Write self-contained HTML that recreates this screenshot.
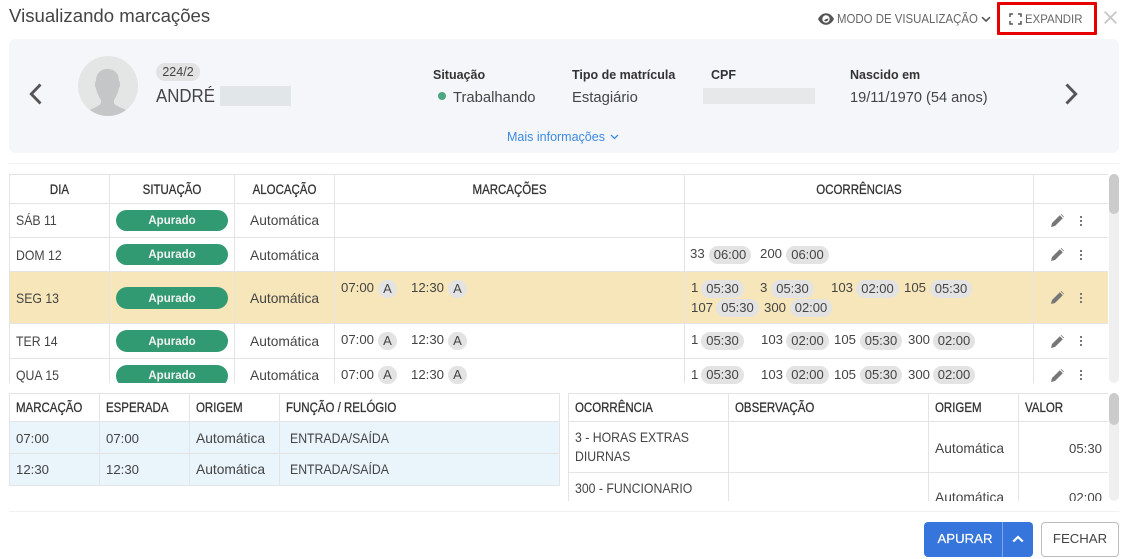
<!DOCTYPE html>
<html><head><meta charset="utf-8"><style>
html,body{margin:0;padding:0;width:1126px;height:559px;overflow:hidden;background:#fff}
body{position:relative;font-family:"Liberation Sans",Arial,sans-serif;font-size:13.8px;color:#444}
.t{position:absolute;white-space:nowrap;line-height:18px;height:18px;margin-top:1px}
.n{margin-top:0}
.b{position:absolute}
.h{color:#333;-webkit-text-stroke:.3px #333;font-size:13.5px;transform:scaleX(.85);transform-origin:left center}
.h.c{transform-origin:center}
.c{text-align:center}
.u{font-size:13.8px;transform:scaleX(.89);transform-origin:left center}
.r{font-size:13.2px}
.p{position:absolute;left:116px;width:112px;background:#329a73;color:#f2f2f2;border-radius:11px;text-align:center;font-weight:bold;font-size:11.5px}
.g{position:absolute;background:#e3e3e3;border-radius:9px;height:18px;line-height:18px;text-align:center;font-size:13px;color:#444}
.l{position:absolute;background:#e4e4e4}
.lab{font-weight:bold;color:#333;font-size:12.5px}
.v{font-size:14.8px}
svg{position:absolute;overflow:visible}
</style></head><body>

<div class="t n" style="left:9px;top:4px;line-height:24px;height:24px;font-size:18.6px;color:#444">Visualizando marcações</div>

<svg style="left:818px;top:12px" width="16" height="14" viewBox="0 0 16 14"><path d="M0 7C2 3 5 1.200 8 1.200S14 3 16 7C14 11 11 12.800 8 12.800S2 11 0 7Z" fill="#555"/><circle cx="8" cy="7" r="3.700" fill="#fff"/><path d="M6 8.500A2.500 2.500 0 0 0 10.300 6.500L8 7Z" fill="#555"/></svg>
<div class="t n" style="left:837px;top:10px;font-size:12.7px;color:#666;transform:scaleX(.9);transform-origin:left center">MODO DE VISUALIZAÇÃO</div>
<svg style="left:981px;top:16px" width="10" height="7" viewBox="0 0 10 7"><path d="M1 1.200L5 5L9 1.200" fill="none" stroke="#555" stroke-width="1.600"/></svg>
<div class="b" style="left:997px;top:2px;width:94px;height:27px;border:3px solid #e60000;border-radius:1px"></div>
<svg style="left:1009px;top:13px" width="13" height="12" viewBox="0 0 13 12"><path d="M1 4V1H4M9 1H12V4M12 8V11H9M4 11H1V8" fill="none" stroke="#555" stroke-width="1.500"/></svg>
<div class="t n" style="left:1025px;top:10px;font-size:12.4px;color:#666;transform:scaleX(.92);transform-origin:left center">EXPANDIR</div>
<svg style="left:1104px;top:11px" width="13" height="13" viewBox="0 0 13 13"><path d="M.7.700L12.300 12.300M12.300.700L.7 12.300" stroke="#c8c8c8" stroke-width="1.900"/></svg>

<div class="b" style="left:9px;top:39px;width:1110px;height:114px;background:#f4f6fa;border-radius:7px"></div>
<div class="b" style="left:9px;top:163px;width:1110px;height:1px;background:#f1f1f1"></div>

<svg style="left:29px;top:83px" width="13" height="22" viewBox="0 0 13 22"><path d="M11.500 1.500L2.300 11L11.500 20.500" fill="none" stroke="#555" stroke-width="2.900"/></svg>
<svg style="left:1065px;top:83px" width="13" height="22" viewBox="0 0 13 22"><path d="M1.500 1.500L10.700 11L1.500 20.500" fill="none" stroke="#555" stroke-width="2.900"/></svg>

<svg style="left:78px;top:56px" width="60" height="60" viewBox="0 0 60 60"><defs><clipPath id="av"><circle cx="30" cy="30" r="30"/></clipPath></defs><circle cx="30" cy="30" r="30" fill="#e4e5e5"/><path clip-path="url(#av)" d="M29.500 13C37 13 41 18 41 25C42.500 26 42.500 30 41 32C40 37 38 41 36 44V47C37 50 45 52 50 55V60H10V55C15 52 22 50 23 47V44C21 41 19 37 18 32C16.500 30 16.500 26 18 25C18 18 22 13 29.500 13Z" fill="#c5c6c7"/></svg>

<div class="b" style="left:156px;top:63px;width:44px;height:18px;background:#e3e3e3;border-radius:9px"></div>
<div class="t c n" style="left:156px;top:63px;width:44px;font-size:12.5px;color:#444">224/2</div>
<div class="t n" style="left:156px;top:85px;line-height:22px;height:22px;font-size:18px;color:#444;transform:scaleX(.935);transform-origin:left center">ANDRÉ</div>
<div class="b" style="left:220px;top:86px;width:71px;height:20px;background:#e1e6e9"></div>

<div class="t lab" style="left:433px;top:65px">Situação</div>
<div class="b" style="left:438px;top:92px;width:8px;height:8px;border-radius:50%;background:#4ba682"></div>
<div class="t v" style="left:453px;top:88px">Trabalhando</div>
<div class="t lab" style="left:572px;top:65px">Tipo de matrícula</div>
<div class="t v" style="left:572px;top:88px">Estagiário</div>
<div class="t lab" style="left:711px;top:65px">CPF</div>
<div class="b" style="left:703px;top:88px;width:112px;height:16px;background:#e6e8ea"></div>
<div class="t lab" style="left:850px;top:65px">Nascido em</div>
<div class="t" style="left:850px;top:88px;font-size:14.6px">19/11/1970 (54 anos)</div>
<div class="t n" style="left:507px;top:128px;font-size:12.5px;color:#3d8ae0">Mais informações</div>
<svg style="left:610px;top:134px" width="9" height="6" viewBox="0 0 9 6"><path d="M1 1L4.500 4.500L8 1" fill="none" stroke="#3d8ae0" stroke-width="1.300"/></svg>

<!-- upper table -->
<div class="b" style="left:10px;top:271px;width:1098px;height:52px;background:#f7e6ba"></div>
<div class="l" style="left:9px;top:174px;width:1099px;height:1px"></div>
<div class="l" style="left:9px;top:203px;width:1099px;height:1px"></div>
<div class="l" style="left:9px;top:237px;width:1099px;height:1px"></div>
<div class="l" style="left:9px;top:271px;width:1099px;height:1px"></div>
<div class="l" style="left:9px;top:323px;width:1099px;height:1px"></div>
<div class="l" style="left:9px;top:358px;width:1099px;height:1px"></div>
<div class="l" style="left:9px;top:174px;width:1px;height:209px"></div>
<div class="l" style="left:109px;top:174px;width:1px;height:209px"></div>
<div class="l" style="left:234px;top:174px;width:1px;height:209px"></div>
<div class="l" style="left:334px;top:174px;width:1px;height:209px"></div>
<div class="l" style="left:684px;top:174px;width:1px;height:209px"></div>
<div class="l" style="left:1033px;top:174px;width:1px;height:209px"></div>
<div class="b" style="left:1109px;top:174px;width:10px;height:209px;background:#efefef;border-radius:5px"></div>
<div class="b" style="left:1109px;top:174px;width:10px;height:40px;background:#cbcbcb;border-radius:5px"></div>

<div class="t h c" style="left:10px;top:180px;width:99px">DIA</div>
<div class="t h c" style="left:110px;top:180px;width:124px">SITUAÇÃO</div>
<div class="t h c" style="left:235px;top:180px;width:99px">ALOCAÇÃO</div>
<div class="t h c" style="left:335px;top:180px;width:349px">MARCAÇÕES</div>
<div class="t h c" style="left:685px;top:180px;width:348px">OCORRÊNCIAS</div>

<div class="t u" style="left:16px;top:211px">SÁB 11</div>
<div class="t u" style="left:16px;top:246px">DOM 12</div>
<div class="t u" style="left:16px;top:289px">SEG 13</div>
<div class="t u" style="left:16px;top:332px">TER 14</div>
<div class="t u" style="left:16px;top:366px">QUA 15</div>

<div class="p" style="top:210px;height:21px;line-height:23px">Apurado</div>
<div class="p" style="top:244px;height:21px;line-height:23px">Apurado</div>
<div class="p" style="top:287px;height:22px;line-height:24px">Apurado</div>
<div class="p" style="top:330px;height:22px;line-height:24px">Apurado</div>
<div class="b" style="left:0;top:360px;width:1108px;height:23px;overflow:hidden"><div class="p" style="top:5px;height:22px;line-height:23px">Apurado</div></div>

<div class="t" style="left:250px;top:211px">Automática</div>
<div class="t" style="left:250px;top:246px">Automática</div>
<div class="t" style="left:250px;top:289px">Automática</div>
<div class="t" style="left:250px;top:332px">Automática</div>
<div class="t" style="left:250px;top:366px">Automática</div>

<!-- marks -->
<div class="t r" style="left:341px;top:278px">07:00</div><div class="g" style="left:378px;top:280px;width:19px">A</div>
<div class="t r" style="left:411px;top:278px">12:30</div><div class="g" style="left:448px;top:280px;width:19px">A</div>
<div class="t r" style="left:341px;top:330px">07:00</div><div class="g" style="left:378px;top:332px;width:19px">A</div>
<div class="t r" style="left:411px;top:330px">12:30</div><div class="g" style="left:448px;top:332px;width:19px">A</div>
<div class="t r" style="left:341px;top:365px">07:00</div><div class="g" style="left:378px;top:366px;width:19px">A</div>
<div class="t r" style="left:411px;top:365px">12:30</div><div class="g" style="left:448px;top:366px;width:19px">A</div>

<!-- occurrences -->
<div class="t r" style="left:690px;top:244px">33</div><div class="g" style="left:709px;top:246px;width:42px">06:00</div>
<div class="t r" style="left:760px;top:244px">200</div><div class="g" style="left:786px;top:246px;width:43px">06:00</div>

<div class="t r" style="left:691px;top:278px">1</div><div class="g" style="left:701px;top:280px;width:43px">05:30</div>
<div class="t r" style="left:760px;top:278px">3</div><div class="g" style="left:771px;top:280px;width:43px">05:30</div>
<div class="t r" style="left:831px;top:278px">103</div><div class="g" style="left:856px;top:280px;width:43px">02:00</div>
<div class="t r" style="left:904px;top:278px">105</div><div class="g" style="left:930px;top:280px;width:42px">05:30</div>
<div class="t r" style="left:691px;top:298px">107</div><div class="g" style="left:716px;top:299px;width:43px">05:30</div>
<div class="t r" style="left:764px;top:298px">300</div><div class="g" style="left:790px;top:299px;width:42px">02:00</div>

<div class="t r" style="left:691px;top:330px">1</div><div class="g" style="left:701px;top:332px;width:43px">05:30</div>
<div class="t r" style="left:761px;top:330px">103</div><div class="g" style="left:786px;top:332px;width:43px">02:00</div>
<div class="t r" style="left:834px;top:330px">105</div><div class="g" style="left:860px;top:332px;width:42px">05:30</div>
<div class="t r" style="left:908px;top:330px">300</div><div class="g" style="left:933px;top:332px;width:42px">02:00</div>

<div class="t r" style="left:691px;top:365px">1</div><div class="g" style="left:701px;top:366px;width:43px">05:30</div>
<div class="t r" style="left:761px;top:365px">103</div><div class="g" style="left:786px;top:366px;width:43px">02:00</div>
<div class="t r" style="left:834px;top:365px">105</div><div class="g" style="left:860px;top:366px;width:42px">05:30</div>
<div class="t r" style="left:908px;top:365px">300</div><div class="g" style="left:933px;top:366px;width:42px">02:00</div>

<!-- row icons -->
<svg style="left:1051px;top:214px" width="13" height="13" viewBox="0 0 13 13"><path d="M0 13L1 9L8.800 1.200L11.800 4.200L4 12Z M9.600.4L10.300 0L13 2.700L12.600 3.400Z" fill="#777"/></svg>
<svg style="left:1051px;top:248px" width="13" height="13" viewBox="0 0 13 13"><path d="M0 13L1 9L8.800 1.200L11.800 4.200L4 12Z M9.600.4L10.300 0L13 2.700L12.600 3.400Z" fill="#777"/></svg>
<svg style="left:1051px;top:291px" width="13" height="13" viewBox="0 0 13 13"><path d="M0 13L1 9L8.800 1.200L11.800 4.200L4 12Z M9.600.4L10.300 0L13 2.700L12.600 3.400Z" fill="#777"/></svg>
<svg style="left:1051px;top:335px" width="13" height="13" viewBox="0 0 13 13"><path d="M0 13L1 9L8.800 1.200L11.800 4.200L4 12Z M9.600.4L10.300 0L13 2.700L12.600 3.400Z" fill="#777"/></svg>
<svg style="left:1051px;top:369px" width="13" height="13" viewBox="0 0 13 13"><path d="M0 13L1 9L8.800 1.200L11.800 4.200L4 12Z M9.600.4L10.300 0L13 2.700L12.600 3.400Z" fill="#777"/></svg>
<svg style="left:1080px;top:216px" width="2" height="10" viewBox="0 0 2 10"><path d="M0 0H2V2H0ZM0 4H2V6H0ZM0 8H2V10H0Z" fill="#777"/></svg>
<svg style="left:1080px;top:250px" width="2" height="10" viewBox="0 0 2 10"><path d="M0 0H2V2H0ZM0 4H2V6H0ZM0 8H2V10H0Z" fill="#777"/></svg>
<svg style="left:1080px;top:293px" width="2" height="10" viewBox="0 0 2 10"><path d="M0 0H2V2H0ZM0 4H2V6H0ZM0 8H2V10H0Z" fill="#777"/></svg>
<svg style="left:1080px;top:336px" width="2" height="10" viewBox="0 0 2 10"><path d="M0 0H2V2H0ZM0 4H2V6H0ZM0 8H2V10H0Z" fill="#777"/></svg>
<svg style="left:1080px;top:370px" width="2" height="10" viewBox="0 0 2 10"><path d="M0 0H2V2H0ZM0 4H2V6H0ZM0 8H2V10H0Z" fill="#777"/></svg>

<!-- lower-left table -->
<div class="b" style="left:10px;top:422px;width:549px;height:63px;background:#e9f4fb"></div>
<div class="l" style="left:9px;top:393px;width:551px;height:1px"></div>
<div class="l" style="left:9px;top:421px;width:551px;height:1px"></div>
<div class="l" style="left:9px;top:453px;width:551px;height:1px"></div>
<div class="l" style="left:9px;top:485px;width:551px;height:1px"></div>
<div class="l" style="left:9px;top:393px;width:1px;height:93px"></div>
<div class="l" style="left:99px;top:393px;width:1px;height:93px"></div>
<div class="l" style="left:189px;top:393px;width:1px;height:93px"></div>
<div class="l" style="left:279px;top:393px;width:1px;height:93px"></div>
<div class="l" style="left:559px;top:393px;width:1px;height:93px"></div>
<div class="t h" style="left:16px;top:398px">MARCAÇÃO</div>
<div class="t h" style="left:106px;top:398px">ESPERADA</div>
<div class="t h" style="left:196px;top:398px">ORIGEM</div>
<div class="t h" style="left:286px;top:398px">FUNÇÃO / RELÓGIO</div>
<div class="t r" style="left:16px;top:429px">07:00</div>
<div class="t r" style="left:106px;top:429px">07:00</div>
<div class="t" style="left:196px;top:429px">Automática</div>
<div class="t u" style="left:290px;top:429px">ENTRADA/SAÍDA</div>
<div class="t r" style="left:16px;top:460px">12:30</div>
<div class="t r" style="left:106px;top:460px">12:30</div>
<div class="t" style="left:196px;top:460px">Automática</div>
<div class="t u" style="left:290px;top:460px">ENTRADA/SAÍDA</div>

<!-- lower-right table -->
<div class="b" style="left:568px;top:393px;width:541px;height:108px;overflow:hidden">
<div class="l" style="left:0;top:0;width:540px;height:1px"></div>
<div class="l" style="left:0;top:28px;width:540px;height:1px"></div>
<div class="l" style="left:0;top:79px;width:540px;height:1px"></div>
<div class="l" style="left:0;top:0;width:1px;height:108px"></div>
<div class="l" style="left:160px;top:0;width:1px;height:108px"></div>
<div class="l" style="left:360px;top:0;width:1px;height:108px"></div>
<div class="l" style="left:450px;top:0;width:1px;height:108px"></div>
<div class="t h" style="left:7px;top:5px">OCORRÊNCIA</div>
<div class="t h" style="left:167px;top:5px">OBSERVAÇÃO</div>
<div class="t h" style="left:367px;top:5px">ORIGEM</div>
<div class="t h" style="left:457px;top:5px">VALOR</div>
<div class="t u" style="left:7px;top:35px">3 - HORAS EXTRAS</div>
<div class="t u" style="left:7px;top:54px">DIURNAS</div>
<div class="t" style="left:367px;top:46px">Automática</div>
<div class="t r" style="right:7px;top:46px">05:30</div>
<div class="t u" style="left:7px;top:86px">300 - FUNCIONARIO</div>
<div class="t" style="left:367px;top:95px">Automática</div>
<div class="t r" style="right:7px;top:95px">02:00</div>
</div>
<div class="b" style="left:1109px;top:393px;width:10px;height:108px;background:#efefef;border-radius:5px"></div>
<div class="b" style="left:1109px;top:393px;width:10px;height:32px;background:#cbcbcb;border-radius:5px"></div>

<div class="b" style="left:9px;top:511px;width:1110px;height:1px;background:#f1f1f1"></div>

<!-- buttons -->
<div class="b" style="left:924px;top:522px;width:109px;height:35px;background:#3575dc;border-radius:4px"></div>
<div class="b" style="left:1002px;top:522px;width:1px;height:35px;background:#7ea6e8"></div>
<div class="t c n" style="left:926px;top:530px;width:78px;font-size:13.2px;color:#fff;-webkit-text-stroke:.2px #fff">APURAR</div>
<svg style="left:1012px;top:535px" width="12" height="8" viewBox="0 0 12 8"><path d="M1.200 6.500L6 2L10.800 6.500" fill="none" stroke="#fff" stroke-width="2.200"/></svg>
<div class="b" style="left:1041px;top:522px;width:76px;height:33px;border:1px solid #bdbdbd;border-radius:4px"></div>
<div class="t c n" style="left:1041px;top:530px;width:78px;font-size:13.2px;color:#444">FECHAR</div>

</body></html>
